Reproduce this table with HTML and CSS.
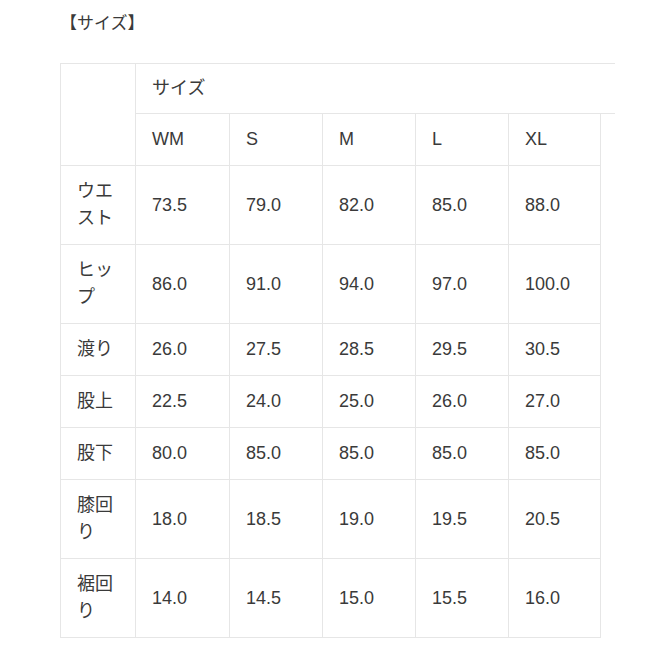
FILE: index.html
```html
<!DOCTYPE html>
<html lang="ja">
<head>
<meta charset="utf-8">
<link rel="stylesheet" href="styles.css">
</head>
<body>
<div class="page">
  <div class="title">【サイズ】</div>
  <div class="grid">
    <div class="cell corner"></div>
    <div class="cell size-head">サイズ</div>
    <div class="cell">WM</div>
    <div class="cell">S</div>
    <div class="cell">M</div>
    <div class="cell">L</div>
    <div class="cell">XL</div>
    <div class="cell extra"></div>

    <div class="cell label">ウエスト</div>
    <div class="cell">73.5</div><div class="cell">79.0</div><div class="cell">82.0</div><div class="cell">85.0</div><div class="cell">88.0</div><div class="gap"></div>

    <div class="cell label">ヒップ</div>
    <div class="cell">86.0</div><div class="cell">91.0</div><div class="cell">94.0</div><div class="cell">97.0</div><div class="cell">100.0</div><div class="gap"></div>

    <div class="cell label">渡り</div>
    <div class="cell">26.0</div><div class="cell">27.5</div><div class="cell">28.5</div><div class="cell">29.5</div><div class="cell">30.5</div><div class="gap"></div>

    <div class="cell label">股上</div>
    <div class="cell">22.5</div><div class="cell">24.0</div><div class="cell">25.0</div><div class="cell">26.0</div><div class="cell">27.0</div><div class="gap"></div>

    <div class="cell label">股下</div>
    <div class="cell">80.0</div><div class="cell">85.0</div><div class="cell">85.0</div><div class="cell">85.0</div><div class="cell">85.0</div><div class="gap"></div>

    <div class="cell label">膝回り</div>
    <div class="cell">18.0</div><div class="cell">18.5</div><div class="cell">19.0</div><div class="cell">19.5</div><div class="cell">20.5</div><div class="gap"></div>

    <div class="cell label">裾回り</div>
    <div class="cell">14.0</div><div class="cell">14.5</div><div class="cell">15.0</div><div class="cell">15.5</div><div class="cell">16.0</div><div class="gap"></div>
  </div>
</div>
</body>
</html>
```

FILE: styles.css
```css
html, body {
  margin: 0;
  padding: 0;
  background: #ffffff;
}

.page {
  padding: 12px 0 0 60px;
  font-family: "Liberation Sans", "Noto Sans CJK JP", sans-serif;
  color: #3a3a3a;
}

.title {
  font-size: 17px;
  line-height: 24px;
  margin-bottom: 27px;
}

.grid {
  display: grid;
  grid-template-columns: 76px 94px 93px 93px 93px 92px 14px;
  font-size: 18px;
  line-height: 27px;
}

.cell {
  box-sizing: border-box;
  padding: 12px 16px 12px 16px;
  border-right: 1px solid #e6e6e6;
  border-bottom: 1px solid #e6e6e6;
  display: flex;
  align-items: center;
}

.corner {
  grid-row: 1 / 3;
  grid-column: 1;
  border-top: 1px solid #e6e6e6;
  border-left: 1px solid #e6e6e6;
}

.size-head {
  grid-column: 2 / 8;
  border-top: 1px solid #e6e6e6;
  border-right: none;
  padding-top: 11px;
  padding-bottom: 11px;
}

.extra {
  border: none;
}

.label {
  border-left: 1px solid #e6e6e6;
  padding-right: 14px;
  word-break: break-all;
}

.gap {
  display: block;
}
```
